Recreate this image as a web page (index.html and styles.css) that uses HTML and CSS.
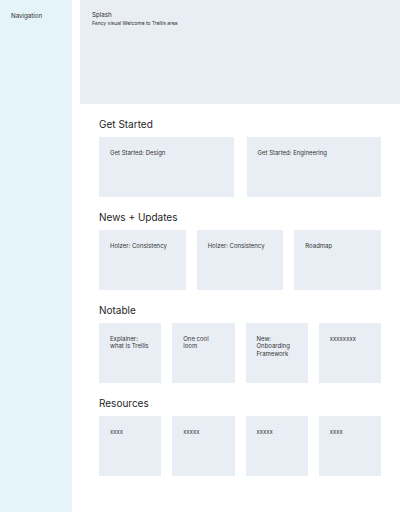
FILE: index.html
```html
<!DOCTYPE html>
<html>
<head>
<meta charset="utf-8">
<link rel="stylesheet" href="styles.css">
</head>
<body>
<div class="app">
  <nav class="sidebar"><div class="nav-title">Navigation</div></nav>
  <main class="main">
    <section class="splash">
      <div class="splash-title">Splash</div>
      <div class="splash-sub">Fancy visual Welcome to Trellis area</div>
    </section>
    <div class="content">
      <section class="section">
        <h2 class="heading">Get Started</h2>
        <div class="cards cols-2">
          <div class="card">Get Started: Design</div>
          <div class="card">Get Started: Engineering</div>
        </div>
      </section>
      <section class="section">
        <h2 class="heading">News + Updates</h2>
        <div class="cards cols-3">
          <div class="card">Holzer: Consistency</div>
          <div class="card">Holzer: Consistency</div>
          <div class="card">Roadmap</div>
        </div>
      </section>
      <section class="section">
        <h2 class="heading">Notable</h2>
        <div class="cards cols-4">
          <div class="card">Explainer:<br>what is Trellis</div>
          <div class="card">One cool<br>loom</div>
          <div class="card">New:<br>Onboarding<br>Framework</div>
          <div class="card">xxxxxxxx</div>
        </div>
      </section>
      <section class="section">
        <h2 class="heading">Resources</h2>
        <div class="cards cols-4">
          <div class="card">xxxx</div>
          <div class="card">xxxxx</div>
          <div class="card">xxxxx</div>
          <div class="card">xxxx</div>
        </div>
      </section>
    </div>
  </main>
</div>
</body>
</html>
```

FILE: styles.css
```css
html, body {
  margin: 0;
  padding: 0;
  background: #ffffff;
  font-family: Inter, "Noto Sans", sans-serif;
  color: #2b2b2b;
}
.app {
  display: flex;
  gap: 8px;
  min-height: 512px;
}
.sidebar {
  width: 72px;
  flex: none;
  background: #e5f4f8;
  padding: 12px 11px;
  box-sizing: border-box;
}
.nav-title {
  font-size: 6.2px;
  line-height: 7px;
}
.main {
  flex: 1;
  min-width: 0;
}
.splash {
  height: 104px;
  background: #e9eef5;
  padding: 11px 12px;
  box-sizing: border-box;
}
.splash-title {
  font-size: 6.2px;
  line-height: 8px;
}
.splash-sub {
  font-size: 5px;
  line-height: 7px;
  margin-top: 1px;
}
.content {
  padding: 0 19px;
}
.section {
  margin-top: 13px;
}
.heading {
  margin: 0 0 6px;
  font-size: 10px;
  line-height: 14px;
  font-weight: 400;
  color: #1e1e1e;
}
.cards {
  display: grid;
  column-gap: 11px;
}
.cols-2 { grid-template-columns: repeat(2, 1fr); column-gap: 13px; }
.cols-3 { grid-template-columns: repeat(3, 1fr); }
.cols-4 { grid-template-columns: repeat(4, 1fr); }
.card {
  height: 60px;
  background: #e9eef5;
  padding: 12px 11px;
  box-sizing: border-box;
  font-size: 6px;
  line-height: 7.3px;
  color: #333333;
}
```
